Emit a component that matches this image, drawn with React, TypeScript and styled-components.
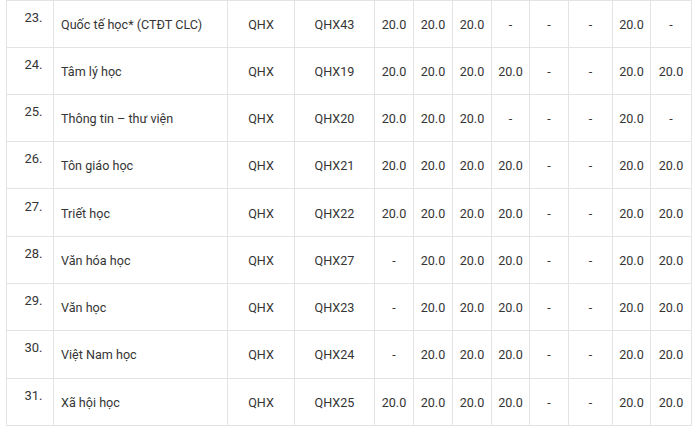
import React from "react"
import styled, { createGlobalStyle } from "styled-components"

const GlobalStyle = createGlobalStyle`
  html, body {
    margin: 0;
    padding: 0;
    background: #fff;
  }
  body {
    font-family: Roboto, "Liberation Sans", Arial, sans-serif;
  }
`

const Page = styled.div`
  padding-left: 6px;
  width: 700px;
  height: 432px;
  box-sizing: border-box;
  overflow: hidden;
`

const Table = styled.div`
  display: grid;
  width: 686px;
  border-top: 1px solid #e3e3e3;
  border-left: 1px solid #e3e3e3;
  box-sizing: border-box;
`

const Row = styled.div`
  display: grid;
  grid-template-columns: 47px 174px 67px 80px 39px 39px 39px 38px 39px 44px 38px 41px;
  height: 47.3px;
  box-sizing: border-box;
  border-bottom: 1px solid #e3e3e3;
  &:first-child {
    height: 46.5px;
  }
`

const Cell = styled.div<{ $align?: "left" | "center" }>`
  display: flex;
  align-items: center;
  justify-content: ${(p) => (p.$align === "left" ? "flex-start" : "center")};
  padding-left: ${(p) => (p.$align === "left" ? "7px" : "0")};
  padding-top: 1px;
  border-right: 1px solid #e3e3e3;
  box-sizing: border-box;
  font-size: 12.6px;
  color: #353535;
  white-space: nowrap;
  overflow: hidden;
`

const NumCell = styled(Cell)`
  padding-left: 7px;
  padding-top: 0;
  padding-bottom: 13px;
  font-size: 13px;
`

type Entry = {
  no: string
  name: string
  code: string
  scores: string[]
}

const D = "-"
const S = "20.0"

const rows: Entry[] = [
  { no: "23.", name: "Quốc tế học* (CTĐT CLC)", code: "QHX43", scores: [S, S, S, D, D, D, S, D] },
  { no: "24.", name: "Tâm lý học", code: "QHX19", scores: [S, S, S, S, D, D, S, S] },
  { no: "25.", name: "Thông tin – thư viện", code: "QHX20", scores: [S, S, S, D, D, D, S, D] },
  { no: "26.", name: "Tôn giáo học", code: "QHX21", scores: [S, S, S, S, D, D, S, S] },
  { no: "27.", name: "Triết học", code: "QHX22", scores: [S, S, S, S, D, D, S, S] },
  { no: "28.", name: "Văn hóa học", code: "QHX27", scores: [D, S, S, S, D, D, S, S] },
  { no: "29.", name: "Văn học", code: "QHX23", scores: [D, S, S, S, D, D, S, S] },
  { no: "30.", name: "Việt Nam học", code: "QHX24", scores: [D, S, S, S, D, D, S, S] },
  { no: "31.", name: "Xã hội học", code: "QHX25", scores: [S, S, S, S, D, D, S, S] },
]

export default function App() {
  return (
    <Page>
      <GlobalStyle />
      <Table>
        {rows.map((r) => (
          <Row key={r.no}>
            <NumCell>{r.no}</NumCell>
            <Cell $align="left">{r.name}</Cell>
            <Cell>QHX</Cell>
            <Cell>{r.code}</Cell>
            {r.scores.map((s, i) => (
              <Cell key={i}>{s}</Cell>
            ))}
          </Row>
        ))}
      </Table>
    </Page>
  )
}
